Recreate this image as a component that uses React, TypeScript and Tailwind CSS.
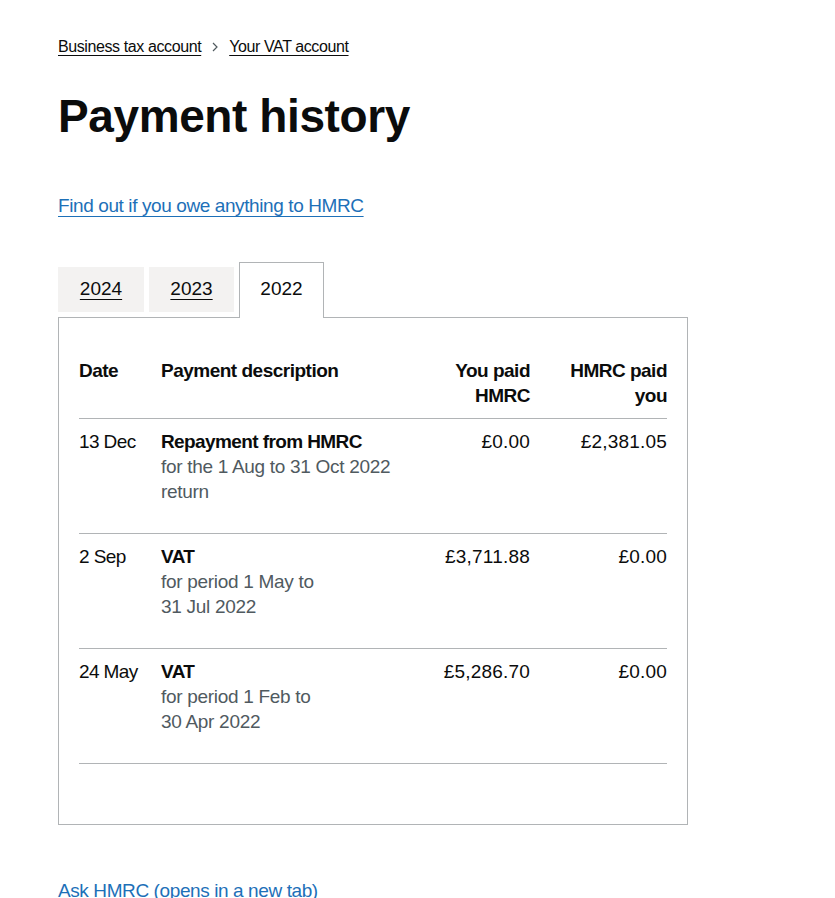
import React from 'react';

type Row = {
  date: string;
  title: string;
  lines: string[];
  paid: string;
  received: string;
};

const rows: Row[] = [
  {
    date: '13 Dec',
    title: 'Repayment from HMRC',
    lines: ['for the 1 Aug to 31 Oct 2022', 'return'],
    paid: '£0.00',
    received: '£2,381.05',
  },
  {
    date: '2 Sep',
    title: 'VAT',
    lines: ['for period 1 May to', '31 Jul 2022'],
    paid: '£3,711.88',
    received: '£0.00',
  },
  {
    date: '24 May',
    title: 'VAT',
    lines: ['for period 1 Feb to', '30 Apr 2022'],
    paid: '£5,286.70',
    received: '£0.00',
  },
];

const font = { fontFamily: '"Liberation Sans", Arial, sans-serif' };

export default function App() {
  return (
    <div className="min-h-screen bg-white text-[#0b0c0c]" style={font}>
      <div className="px-[58px] pt-[37px]">
        {/* breadcrumbs */}
        <nav className="flex items-center text-[16px] leading-[20px] tracking-[-0.4px]">
          <a href="#" className="underline underline-offset-[3px] decoration-1">Business tax account</a>
          <svg className="mx-[10px] w-[8px] h-[10px]" viewBox="0 0 8 10" fill="none">
            <path d="M2 1 L6 5 L2 9" stroke="#505a5f" strokeWidth="1.2" />
          </svg>
          <a href="#" className="underline underline-offset-[3px] decoration-1">Your VAT account</a>
        </nav>

        <h1 className="mt-[34px] text-[46px] leading-[50px] font-bold tracking-[-0.4px]">Payment history</h1>

        <p className="mt-[52px] text-[19px] leading-[25px] tracking-[-0.4px]">
          <a href="#" className="text-[#1d70b8] underline underline-offset-[4px] decoration-1">Find out if you owe anything to HMRC</a>
        </p>

        {/* tabs */}
        <div className="mt-[44px] w-[630px]">
          <div className="flex items-start gap-[5px]">
            <a href="#" className="mt-[5px] w-[86px] h-[45px] bg-[#f3f2f1] flex items-center justify-center text-[19px] underline underline-offset-[4px] decoration-1">2024</a>
            <a href="#" className="mt-[5px] w-[85px] h-[45px] bg-[#f3f2f1] flex items-center justify-center text-[19px] underline underline-offset-[4px] decoration-1">2023</a>
            <div className="relative z-10 -mb-px w-[85px] h-[56px] bg-white border border-b-0 border-[#b1b4b6] flex items-center justify-center text-[19px] pb-[2px]">2022</div>
          </div>

          <div className="border border-[#b1b4b6] px-[20px] pt-[30px] pb-[30px]">
            <table className="w-[588px] table-fixed border-collapse text-[19px] leading-[25px] mb-[30px]">
              <colgroup>
                <col className="w-[82px]" />
                <col className="w-[260px]" />
                <col className="w-[129px]" />
                <col className="w-[117px]" />
              </colgroup>
              <thead>
                <tr className="border-b border-[#b1b4b6] tracking-[-0.5px]">
                  <th className="text-left align-top font-bold pt-[10px] pb-[10px] pr-[20px]">Date</th>
                  <th className="text-left align-top font-bold pt-[10px] pb-[10px] pr-[20px]">Payment description</th>
                  <th className="text-right align-top font-bold pt-[10px] pb-[10px] pr-[20px]">You paid<br />HMRC</th>
                  <th className="text-right align-top font-bold pt-[10px] pb-[10px]">HMRC paid<br />you</th>
                </tr>
              </thead>
              <tbody>
                {rows.map((r) => (
                  <tr key={r.date} className="border-b border-[#b1b4b6]">
                    <td className="align-top pt-[10px] pb-[29px] pr-[20px] whitespace-nowrap tracking-[-0.6px]">{r.date}</td>
                    <td className="align-top pt-[10px] pb-[29px] pr-[20px]">
                      <div className="font-bold tracking-[-0.6px]">{r.title}</div>
                      {r.lines.map((l) => (
                        <div key={l} className="text-[#505a5f] whitespace-nowrap tracking-[-0.3px]">{l}</div>
                      ))}
                    </td>
                    <td className="align-top pt-[10px] pb-[29px] pr-[20px] text-right tracking-[0.2px]">{r.paid}</td>
                    <td className="align-top pt-[10px] pb-[29px] text-right tracking-[0.2px]">{r.received}</td>
                  </tr>
                ))}
              </tbody>
            </table>
          </div>
        </div>

        <p className="mt-[53px] text-[19px] leading-[25px] tracking-[-0.4px]">
          <a href="#" className="text-[#1d70b8] underline underline-offset-[4px] decoration-1">Ask HMRC (opens in a new tab)</a>
        </p>
      </div>
    </div>
  );
}
